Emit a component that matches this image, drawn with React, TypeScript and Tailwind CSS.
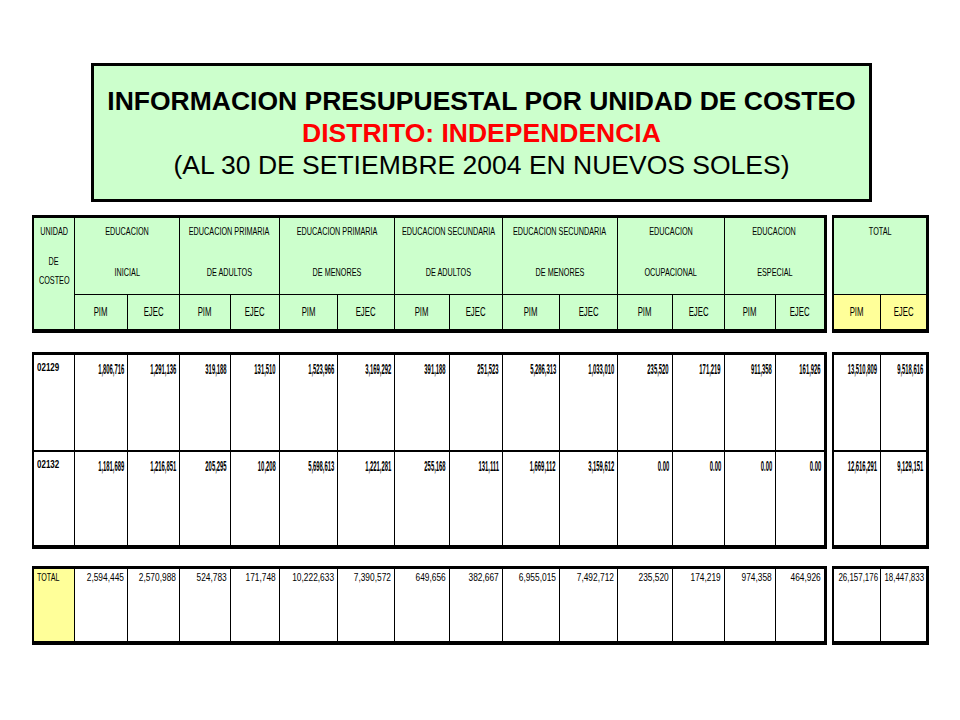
const COLS =
  "grid grid-cols-[40px_53px_52px_51px_49px_58px_57px_55px_53px_57px_58px_55px_52px_51px_49px]";
const TOTAL_COLS = "grid grid-cols-[46px_46px]";

const groups = [
  ["EDUCACION", "INICIAL"],
  ["EDUCACION PRIMARIA", "DE ADULTOS"],
  ["EDUCACION PRIMARIA", "DE MENORES"],
  ["EDUCACION SECUNDARIA", "DE ADULTOS"],
  ["EDUCACION SECUNDARIA", "DE MENORES"],
  ["EDUCACION", "OCUPACIONAL"],
  ["EDUCACION", "ESPECIAL"],
];

type Row = { label: string; values: string[]; totals: string[] };

const rows: Row[] = [
  {
    label: "02129",
    values: [
      "1,806,716", "1,291,136", "319,188", "131,510", "1,523,966", "3,169,292", "391,188",
      "251,523", "5,286,313", "1,033,010", "235,520", "171,219", "911,358", "161,926",
    ],
    totals: ["13,510,809", "9,518,616"],
  },
  {
    label: "02132",
    values: [
      "1,181,689", "1,216,851", "205,295", "10,208", "5,698,613", "1,221,281", "255,168",
      "131,111", "1,669,112", "3,159,612", "0.00", "0.00", "0.00", "0.00",
    ],
    totals: ["12,616,291", "9,129,151"],
  },
];

const total: Row = {
  label: "TOTAL",
  values: [
    "2,594,445", "2,570,988", "524,783", "171,748", "10,222,633", "7,390,572", "649,656",
    "382,667", "6,955,015", "7,492,712", "235,520", "174,219", "974,358", "464,926",
  ],
  totals: ["26,157,176", "18,447,833"],
};

function Head({ children, className = "" }: { children: string; className?: string }) {
  return (
    <span className={`inline-block whitespace-nowrap text-[11px] leading-[12px] scale-x-[0.66] ${className}`}>
      {children}
    </span>
  );
}

function Sub({ children }: { children: string }) {
  return (
    <span className="inline-block whitespace-nowrap text-[13px] leading-[14px] scale-x-[0.6]">
      {children}
    </span>
  );
}

function Num({ value }: { value: string }) {
  return (
    <div className="flex justify-end border-l border-black pr-[3px] pt-[7px]">
      <span className="inline-block origin-right whitespace-nowrap text-[14px] font-bold leading-[14px] scale-x-[0.42]">
        {value}
      </span>
    </div>
  );
}

function TotalNum({ value }: { value: string }) {
  return (
    <div className="flex justify-end border-l border-black pr-[3px] pt-[3px]">
      <span className="inline-block origin-right whitespace-nowrap text-[11px] leading-[11px] scale-x-[0.76]">
        {value}
      </span>
    </div>
  );
}

export default function App() {
  return (
    <div className="min-h-[720px] w-[960px] bg-white pt-[63px] font-['Liberation_Sans',Arial,sans-serif] text-black">
      {/* title */}
      <div className="ml-[91px] flex h-[139px] w-[781px] flex-col items-center justify-center border-[3px] border-black bg-[#ccffcc] text-[26.5px] leading-[32px]">
        <p className="font-bold">INFORMACION PRESUPUESTAL POR UNIDAD DE COSTEO</p>
        <p className="font-bold text-[#ff0000]">DISTRITO: INDEPENDENCIA</p>
        <p>(AL 30 DE SETIEMBRE 2004 EN NUEVOS SOLES)</p>
      </div>

      {/* header */}
      <div className="ml-[32px] mt-[13px] flex gap-[5px]">
        <div className="w-[795px] border-2 border-t-[3px] border-r-[3px] border-b-4 border-black bg-[#ccffcc]">
          <div className={`${COLS} grid-rows-[76px_35px]`}>
            <div className="row-span-2 flex flex-col items-center pt-[7px]">
              <Head>UNIDAD</Head>
              <Head className="mt-[18px]">DE</Head>
              <Head className="mt-[7px]">COSTEO</Head>
            </div>
            {groups.map(([a, b], i) => (
              <div key={i} className="col-span-2 flex flex-col items-center gap-[29px] border-l border-black pt-[7px]">
                <Head>{a}</Head>
                <Head>{b}</Head>
              </div>
            ))}
            {groups.map((_, i) => [
              <div key={`p${i}`} className="flex items-center justify-center border-l border-t border-black">
                <Sub>PIM</Sub>
              </div>,
              <div key={`e${i}`} className="flex items-center justify-center border-l border-t border-black">
                <Sub>EJEC</Sub>
              </div>,
            ])}
          </div>
        </div>
        <div className="w-[97px] border-2 border-t-[3px] border-r-[3px] border-b-4 border-black">
          <div className={`${TOTAL_COLS} grid-rows-[76px_35px]`}>
            <div className="col-span-2 flex justify-center bg-[#ccffcc] pt-[7px]">
              <Head>TOTAL</Head>
            </div>
            <div className="flex items-center justify-center border-t border-black bg-[#ffff99]">
              <Sub>PIM</Sub>
            </div>
            <div className="flex items-center justify-center border-l border-t border-black bg-[#ffff99]">
              <Sub>EJEC</Sub>
            </div>
          </div>
        </div>
      </div>

      {/* data rows */}
      <div className="ml-[32px] mt-[19px] flex gap-[5px]">
        <div className="w-[795px] border-2 border-t-[3px] border-r-[3px] border-b-4 border-black">
          {rows.map((r, i) => (
            <div key={r.label} className={`${COLS} h-[95px] ${i > 0 ? "border-t-2 border-black" : ""}`}>
              <div className="flex items-start pl-[3px] pt-[8px]">
                <span className="inline-block origin-left whitespace-nowrap text-[10px] font-bold leading-[10px] scale-x-[0.8]">
                  {r.label}
                </span>
              </div>
              {r.values.map((v, j) => (
                <Num key={j} value={v} />
              ))}
            </div>
          ))}
        </div>
        <div className="w-[97px] border-2 border-t-[3px] border-r-[3px] border-b-4 border-black">
          {rows.map((r, i) => (
            <div key={r.label} className={`${TOTAL_COLS} h-[95px] ${i > 0 ? "border-t-2 border-black" : ""}`}>
              {r.totals.map((v, j) => (
                <div key={j} className={`flex justify-end pr-[3px] pt-[7px] ${j > 0 ? "border-l border-black" : ""}`}>
                  <span className="inline-block origin-right whitespace-nowrap text-[14px] font-bold leading-[14px] scale-x-[0.42]">
                    {v}
                  </span>
                </div>
              ))}
            </div>
          ))}
        </div>
      </div>

      {/* total row */}
      <div className="ml-[32px] mt-[17px] flex gap-[5px]">
        <div className="w-[795px] border-2 border-t-[3px] border-r-[3px] border-b-4 border-black">
          <div className={`${COLS} h-[72px]`}>
            <div className="flex items-start bg-[#ffff99] pl-[3px] pt-[3px]">
              <span className="inline-block origin-left whitespace-nowrap text-[11px] leading-[11px] scale-x-[0.65]">
                {total.label}
              </span>
            </div>
            {total.values.map((v, j) => (
              <TotalNum key={j} value={v} />
            ))}
          </div>
        </div>
        <div className="w-[97px] border-2 border-t-[3px] border-r-[3px] border-b-4 border-black">
          <div className={`${TOTAL_COLS} h-[72px]`}>
            {total.totals.map((v, j) => (
              <div key={j} className={`flex justify-end pr-[2px] pt-[3px] ${j > 0 ? "border-l border-black" : ""}`}>
                <span className="inline-block origin-right whitespace-nowrap text-[11px] leading-[11px] scale-x-[0.72]">
                  {v}
                </span>
              </div>
            ))}
          </div>
        </div>
      </div>
    </div>
  );
}
